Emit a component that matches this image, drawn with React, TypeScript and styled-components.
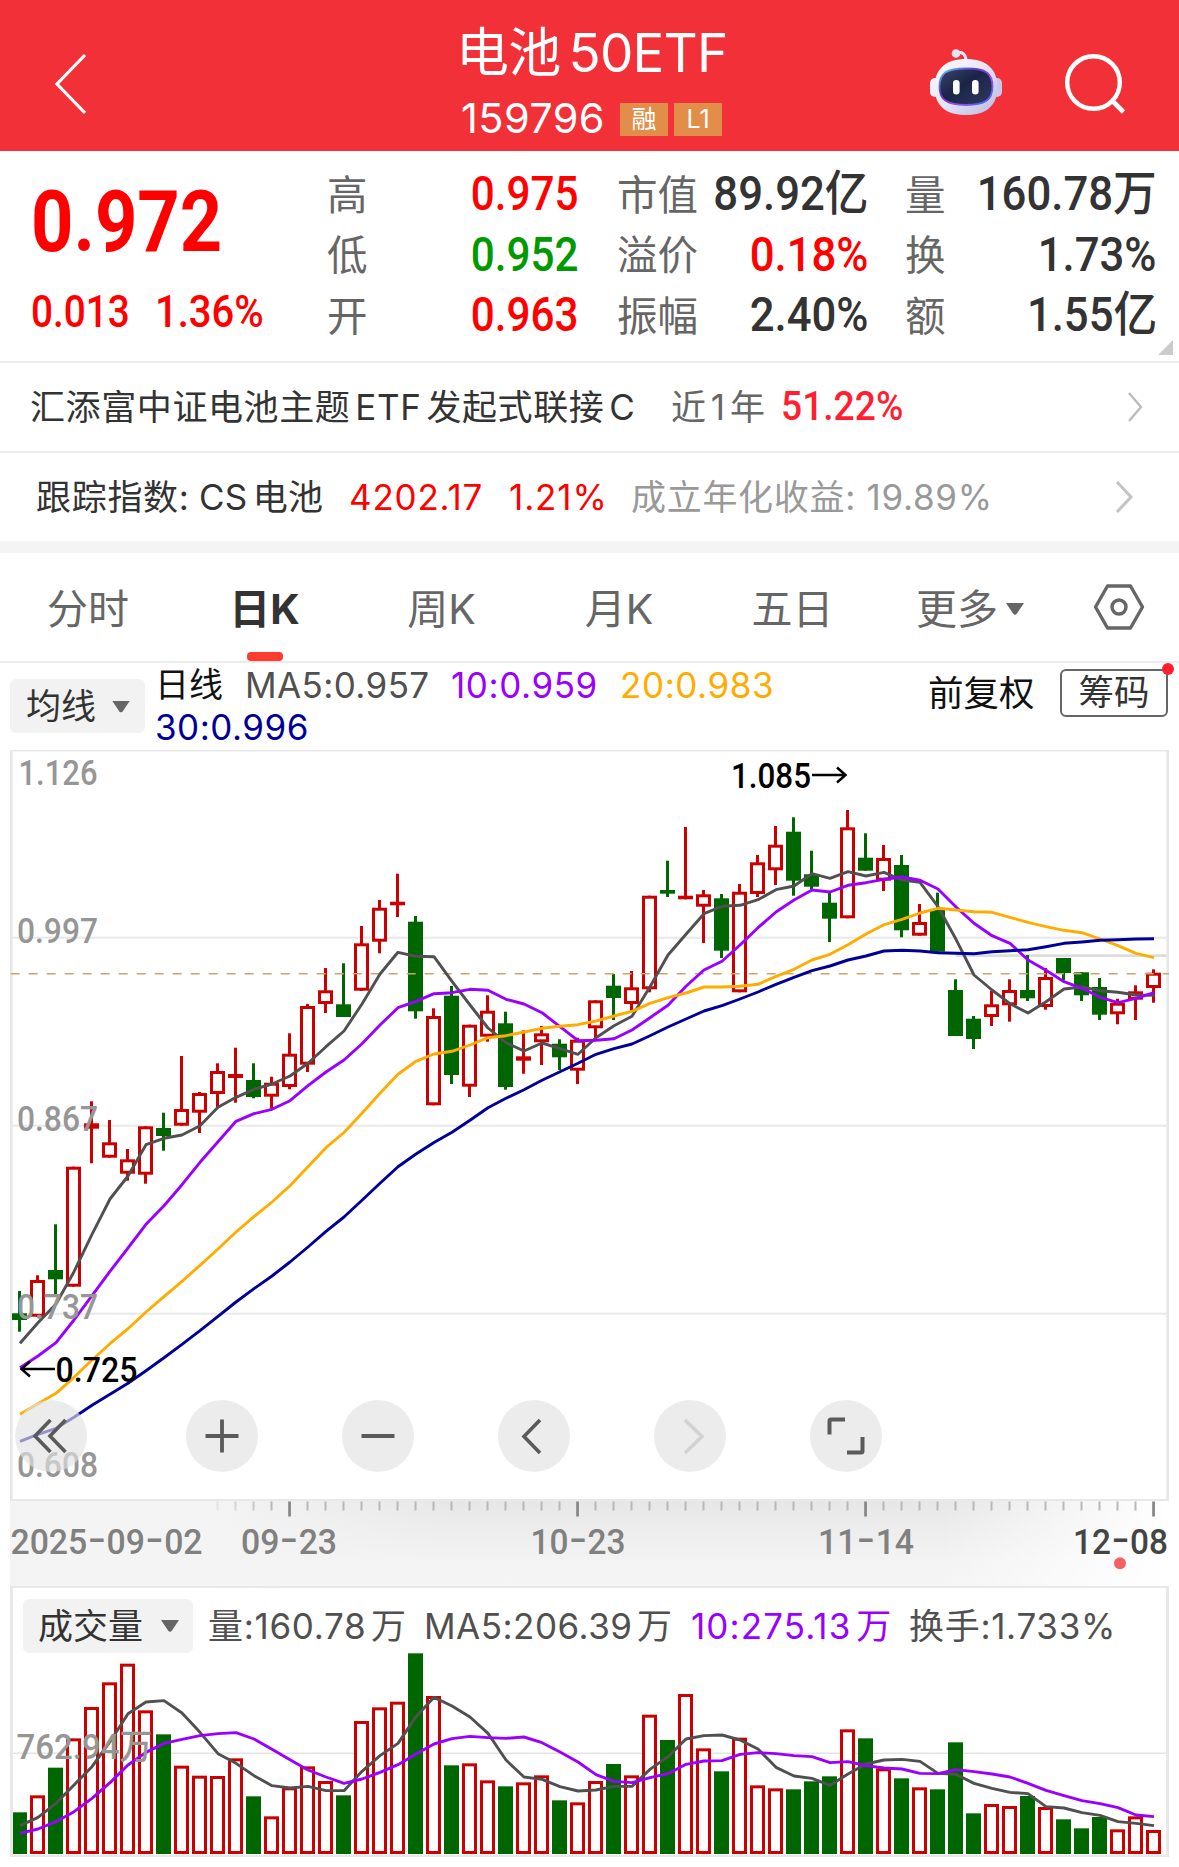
import React from "react";
import styled, { createGlobalStyle } from "styled-components";

const UI = '"Inter", "Noto Sans CJK SC", sans-serif';
const NUM = '"Roboto", "Noto Sans CJK SC", sans-serif';

const RED = "#ff0000";
const UP = "#cc0000";
const DOWN = "#006600";

/* ---------- data ---------- */

type Candle = [string, number, number, number, number];

// direction, high, body top, body bottom, low
const candles: Candle[] = [
  ["d", 1291, 1313.3, 1320, 1331.7],
  ["u", 1275.3, 1280, 1316.7, 1317],
  ["d", 1224.3, 1270, 1279.3, 1294],
  ["u", 1166.7, 1166.7, 1286.7, 1286.7],
  ["u", 1101.3, 1123.3, 1128.7, 1163.3],
  ["u", 1120, 1142.3, 1157.7, 1157.7],
  ["u", 1149, 1159.3, 1173.7, 1180.7],
  ["u", 1126.3, 1126.3, 1174.7, 1183.7],
  ["d", 1112.7, 1128, 1136, 1150.7],
  ["u", 1056, 1109, 1125.7, 1125.7],
  ["u", 1092, 1093, 1112.7, 1133],
  ["u", 1063.3, 1071, 1094, 1107.7],
  ["u", 1047.7, 1074, 1078, 1102.7],
  ["d", 1063.3, 1080, 1097, 1098.3],
  ["u", 1076.7, 1082.7, 1096.7, 1108.7],
  ["u", 1033.3, 1053.7, 1087, 1089.3],
  ["u", 1004, 1006, 1064.7, 1072],
  ["u", 968, 990.3, 1004, 1013],
  ["d", 963.3, 1004.3, 1017, 1017],
  ["u", 926, 943.3, 990.7, 991],
  ["u", 900, 907.7, 941.7, 953.3],
  ["u", 873.7, 901.7, 905.3, 917],
  ["d", 916, 921.7, 1011.3, 1018.7],
  ["u", 1008.3, 1016, 1105.3, 1105.3],
  ["d", 986, 995.7, 1075, 1084],
  ["u", 1024.7, 1024.7, 1086.7, 1097],
  ["u", 995.3, 1010.7, 1036.7, 1041.7],
  ["d", 1011.7, 1023.3, 1087, 1089.7],
  ["u", 1030.3, 1056.3, 1060.7, 1073.7],
  ["u", 1026, 1033.3, 1042.3, 1065],
  ["d", 1039.3, 1043.7, 1057.3, 1070],
  ["u", 1037.7, 1039.7, 1070.7, 1084],
  ["u", 1000.3, 1000.3, 1028.3, 1037.7],
  ["d", 974, 985.7, 998, 1020],
  ["u", 971, 987.3, 1004, 1010.7],
  ["u", 895.7, 895.7, 989.3, 992.3],
  ["d", 860.7, 890, 893.7, 897],
  ["u", 827, 895.7, 899.3, 899.3],
  ["u", 890, 894.3, 906.7, 943],
  ["d", 894, 898.3, 950.7, 958],
  ["u", 884, 891.7, 992.3, 992.3],
  ["u", 855, 862.3, 894, 897],
  ["u", 826, 844.7, 870.3, 885],
  ["d", 817.3, 831.7, 880.7, 895.7],
  ["d", 850.7, 874.3, 886.7, 889],
  ["d", 893, 902.7, 918.7, 942],
  ["u", 810, 827.3, 918.3, 918.3],
  ["d", 833.3, 857.7, 870.7, 870.7],
  ["u", 845, 858, 880.7, 891],
  ["d", 855, 865, 930.3, 937.3],
  ["u", 904, 922, 935.7, 935.7],
  ["d", 892.7, 910, 951.7, 951.7],
  ["d", 979.3, 990, 1036, 1036],
  ["d", 1016, 1018.7, 1039, 1049],
  ["u", 990.7, 1004.3, 1017, 1026],
  ["u", 979.3, 990, 1005.3, 1021.7],
  ["d", 955, 990, 998.3, 1001],
  ["u", 968, 977, 1007, 1009.7],
  ["d", 958, 958, 973, 980],
  ["d", 972.3, 972.3, 995.3, 1001],
  ["d", 978, 987, 1014.7, 1020],
  ["u", 998.7, 1002.7, 1014.3, 1024.3],
  ["u", 985.3, 991.3, 999.7, 1020],
  ["u", 969.3, 972.7, 988, 1002.7],
];

const ma5 = [
  1343.3, 1322.7, 1304, 1271.7, 1234.3, 1199, 1176, 1144.7, 1138.3, 1135, 1125.7, 1107.3, 1097.3, 1089.3, 1084, 1076,
  1063.3, 1046.7, 1031, 1004, 974, 952.3, 956.3, 956.7, 981.3, 1005, 1028, 1042.7, 1051, 1043, 1048.7, 1054.3,
  1037.7, 1025.7, 1016.3, 986.7, 955, 934.3, 913.7, 906.3, 905.3, 899.7, 889.7, 886, 873.7, 878.3, 871.7, 876,
  872.3, 880, 882.3, 906.7, 939.3, 975, 990, 1003.7, 1013, 1001.7, 989, 987, 990.7, 992.3, 995, 995.3,
];
const ma10 = [
  1367.7, 1356, 1342.7, 1320, 1295.7, 1271.3, 1248, 1224.3, 1205.7, 1184.7, 1162.3, 1141.7, 1121.3, 1113.7, 1109.3, 1100.7,
  1085.7, 1072, 1060, 1043.7, 1025, 1007.7, 1001.3, 993.7, 992.7, 989.3, 990.3, 999.3, 1004, 1012.7, 1026.7, 1040.7,
  1040.3, 1038.7, 1030, 1017.7, 1005.3, 986.3, 970, 961.3, 945, 927.7, 912, 900, 890, 892, 885.3, 882.7,
  879.3, 877, 880.3, 889, 907, 923.3, 935.7, 943.3, 960, 970.3, 981.7, 988.3, 997.3, 1002.7, 998.3, 992.7,
];
const ma20 = [
  1414.3, 1403.7, 1393.3, 1377.3, 1360, 1343.7, 1328.7, 1312, 1296.7, 1281.3, 1265.3, 1249, 1232, 1216.7, 1202, 1185.7,
  1166.7, 1147.7, 1132.5, 1113.3, 1093.3, 1074.3, 1061.3, 1054, 1051.3, 1045, 1037.7, 1035.7, 1032, 1028.3, 1026.3, 1024.7,
  1021, 1016, 1011.3, 1003.3, 997.7, 993, 987, 987, 986.3, 984.3, 976.3, 969.3, 960, 954.3, 944.7, 934,
  924.7, 919.3, 913, 908.3, 910, 911.7, 912.3, 917.3, 922.3, 926.7, 930.3, 932.7, 939, 945.7, 953.3, 957.7,
];
const ma30 = [
  1441.3, 1434.3, 1428.3, 1417.3, 1405.3, 1394.3, 1383.3, 1370.7, 1357.7, 1344.3, 1330.7, 1316.3, 1302, 1288.7, 1276, 1262,
  1247, 1231.3, 1217, 1200.3, 1183.3, 1166.7, 1154, 1142.5, 1132.3, 1120.3, 1107.7, 1098.3, 1089.7, 1080.3, 1071.7, 1063.3,
  1054.3, 1048.7, 1044, 1035.7, 1027, 1019, 1011, 1005.7, 999, 992, 984.3, 977.3, 970.7, 966, 960, 956,
  951, 950.3, 951, 952.7, 953.3, 953.7, 951.7, 950.7, 949.7, 946.7, 943.3, 942, 940.3, 939.7, 939, 938.7,
];

// all volume figures are in thirds of a pixel below the panel's origin
const volumes = [
  697, 646, 563, 475, 381, 307, 251, 391, 463, 557, 587, 588, 535, 649, 709, 622, 559, 603, 646, 423, 382, 365, 220, 348,
  556, 550, 601, 619, 607, 586, 661, 667, 603, 552, 586, 404, 480, 342, 505, 574, 473, 616, 625, 628, 604, 589, 448, 475,
  565, 595, 622, 628, 487, 700, 672, 678, 648, 681, 718, 745, 711, 748, 709, 750,
];
const volMa5 = [
  737, 712, 670, 615, 560, 485, 401, 366, 362, 399, 457, 521, 550, 587, 617, 624, 619, 632, 632, 574, 527, 490, 410, 352,
  378, 411, 460, 540, 591, 598, 620, 633, 630, 619, 619, 568, 530, 477, 467, 465, 480, 507, 562, 588, 595, 616, 582, 552,
  540, 538, 544, 580, 583, 610, 625, 637, 641, 680, 684, 698, 706, 725, 730, 737,
];
const volMa10 = [
  760, 747, 725, 695, 655, 608, 555, 517, 490, 478, 467, 461, 458, 477, 508, 539, 570, 591, 610, 597, 577, 554, 522, 492,
  476, 469, 473, 475, 471, 488, 516, 546, 584, 604, 608, 593, 581, 553, 543, 542, 523, 518, 521, 527, 530, 548, 545, 557,
  564, 567, 580, 581, 569, 575, 582, 591, 610, 631, 647, 662, 671, 683, 705, 710,
];

const cx = (i: number) => 19.5 + i * 18;
const volY = (v: number) => 1580 + v / 3;
const polyline = (ys: number[]) => ys.map((y, i) => `${cx(i) + 0.5},${y}`).join(" ");

/* ---------- styled parts ---------- */

const Global = createGlobalStyle`
  body { margin: 0; background: #fff; }
  * { box-sizing: border-box; }
`;

const Page = styled.main`
  width: 1179px;
  height: 1867px;
  overflow: hidden;
  display: flex;
  flex-direction: column;
  background: #fff;
  font-family: ${UI};
  color: #333;
  line-height: 1;
  white-space: nowrap;
`;

const Header = styled.header`
  height: 151px;
  flex: none;
  display: grid;
  grid-template-columns: 456px 344px 249px 130px;
  background: #f23037;
  color: #fff;
`;

const BackSlot = styled.div`
  padding: 52px 0 0 53px;
`;

const TitleBlock = styled.div`
  display: flex;
  flex-direction: column;
  padding-top: 23px;
`;

const Title = styled.h1`
  margin: 0;
  font-size: 53px;
  line-height: 60px;
  font-weight: 400;
  letter-spacing: -0.8px;
  word-spacing: -6px;
`;

const CodeRow = styled.div`
  display: flex;
  align-items: center;
  height: 34px;
  margin-top: 19px;
  padding-left: 4px;
  gap: 6px;
`;

const Code = styled.span`
  width: 154px;
  padding-left: 1px;
  font-size: 41.5px;
  letter-spacing: 0.4px;
`;

const Badge = styled.span`
  width: 48px;
  height: 33px;
  display: flex;
  align-items: center;
  justify-content: center;
  background: #e28d49;
  font-size: 25px;
`;

const RobotSlot = styled.div`
  padding: 48px 0 0 129px;
`;

const SearchSlot = styled.div`
  padding: 52px 0 0 14px;
`;

const Quote = styled.section`
  position: relative;
  height: 212px;
  flex: none;
  display: grid;
  grid-template-columns: 327px 251px 39px 250px 38px 252px;
  padding-top: 13px;
  border-bottom: 2px solid #ececec;
`;

const Latest = styled.div`
  display: flex;
  flex-direction: column;
  padding-left: 31px;
`;

const Condensed = styled.span<{ $size: number; $stretch: number; $color?: string; $right?: boolean; $weight?: number }>`
  display: inline-block;
  font-family: ${NUM};
  font-size: ${(p) => p.$size}px;
  font-weight: ${(p) => p.$weight ?? 500};
  color: ${(p) => p.$color ?? "#333"};
  transform: scaleX(${(p) => p.$stretch});
  transform-origin: ${(p) => (p.$right ? "right" : "left")} center;
`;

const BigPrice = styled.div`
  height: 115px;
  display: flex;
  align-items: center;
`;

const Change = styled.div`
  display: grid;
  grid-template-columns: 124px 1fr;
  height: 68px;
  align-items: center;
`;

const Stats = styled.div<{ $col: number }>`
  grid-column: ${(p) => p.$col};
  display: grid;
  grid-auto-rows: 60.5px;
`;

const Stat = styled.div`
  display: flex;
  align-items: center;
  justify-content: space-between;
`;

const StatLabel = styled.span`
  font-size: 40.5px;
  color: #666;
  padding-top: 3px;
`;

const Corner = styled.i`
  position: absolute;
  right: 6px;
  bottom: 6px;
  border-left: 15px solid transparent;
  border-bottom: 15px solid #ccc;
`;

const LinkRow = styled.section<{ $pad: number; $line?: boolean }>`
  height: ${(p) => (p.$line ? 90 : 88)}px;
  flex: none;
  display: flex;
  align-items: center;
  padding-left: ${(p) => p.$pad}px;
  border-bottom: ${(p) => (p.$line ? "2px solid #ececec" : "none")};
`;

const Run = styled.span<{ $w: number; $color?: string; $size?: number; $ls?: number; $ws?: number }>`
  width: ${(p) => p.$w}px;
  flex: none;
  font-size: ${(p) => p.$size ?? 35}px;
  letter-spacing: ${(p) => p.$ls ?? 0}px;
  word-spacing: ${(p) => p.$ws ?? 0}px;
  color: ${(p) => p.$color ?? "#333"};
`;

const Divider = styled.div`
  height: 12px;
  flex: none;
  background: #f4f4f4;
`;

const Tabs = styled.nav`
  height: 110px;
  flex: none;
  display: grid;
  grid-template-columns: 176px 177px 177px 178px 169px 177px 1fr;
  border-bottom: 2px solid #ececec;
`;

const Tab = styled.div<{ $active?: boolean; $shift?: number }>`
  display: flex;
  flex-direction: column;
  align-items: center;
  justify-content: space-between;
  padding-top: 35px;
  padding-left: ${(p) => p.$shift ?? 0}px;
  font-size: 41px;
  line-height: 42px;
  color: ${(p) => (p.$active ? "#333" : "#666")};
  font-weight: ${(p) => (p.$active ? 700 : 400)};

  &::after {
    content: "";
    width: 36px;
    height: 9px;
    border-radius: 4px;
    background: ${(p) => (p.$active ? "#ff3b30" : "transparent")};
  }
`;

const TabInner = styled.span`
  display: flex;
  align-items: center;
  gap: 8px;
`;

const Caret = styled.i<{ $c?: string }>`
  width: 18px;
  height: 12px;
  flex: none;
  background: ${(p) => p.$c ?? "#666"};
  clip-path: polygon(0 0, 100% 0, 60% 90%, 50% 100%, 40% 90%);
`;

const GearSlot = styled.div`
  padding: 30px 0 0 39px;
`;

const Legend = styled.section`
  height: 87px;
  flex: none;
  display: flex;
  padding-left: 10px;
`;

const Picker = styled.div<{ $w: number; $pad: number }>`
  width: ${(p) => p.$w}px;
  height: 54px;
  flex: none;
  display: flex;
  align-items: center;
  justify-content: space-between;
  padding: 1px ${(p) => p.$pad - 1}px 0 ${(p) => p.$pad}px;
  border-radius: 6px;
  background: #f2f2f2;
  font-size: 35px;
`;

const LegendPicker = styled.div`
  padding-top: 16px;
`;

const Averages = styled.div`
  width: 781px;
  padding: 1px 0 0 10px;
`;

const AverageLine = styled.div`
  display: flex;
  height: 42px;
  align-items: center;
`;

const Adjust = styled.div`
  width: 134px;
  padding: 13px 0 0 2px;
  font-size: 35.500px;
  color: #111;
`;

const Chips = styled.div`
  position: relative;
  width: 108px;
  height: 48px;
  margin-top: 6px;
  display: flex;
  align-items: center;
  justify-content: center;
  border: 2px solid #666;
  border-radius: 6px;
  font-size: 35.500px;

  &::after {
    content: "";
    position: absolute;
    top: -8px;
    right: -8px;
    width: 12px;
    height: 12px;
    border-radius: 50%;
    background: #ff1f30;
  }
`;

const ChartPanel = styled.section`
  position: relative;
  width: 1159px;
  height: 751px;
  flex: none;
  margin-left: 10px;
`;

const Drawing = styled.svg`
  display: block;
`;

const Controls = styled.div`
  position: absolute;
  left: 5px;
  top: 650px;
  display: flex;
  gap: 84px;
`;

const Round = styled.button<{ $wide?: boolean }>`
  width: 72px;
  height: 72px;
  margin-right: ${(p) => (p.$wide ? 15 : 0)}px;
  padding: 0;
  border: 0;
  border-radius: 50%;
  background: rgba(226, 226, 226, 0.65);
`;

const Axis = styled.section`
  width: 1159px;
  height: 85px;
  flex: none;
  margin-left: 10px;
`;

const VolumePanel = styled.section`
  width: 1159px;
  height: 271px;
  flex: none;
  margin-left: 10px;
  border: solid #e8e8e8;
  border-width: 2px 3px;
`;

const VolumeHeader = styled.div`
  display: flex;
  align-items: center;
  height: 65px;
  padding: 10px 0 0 10px;
`;

const VolumeRuns = styled.div`
  display: flex;
  padding: 2px 0 0 15px;
`;

/* ---------- icons ---------- */

const Stroke = ({ d, w, h, sw, color }: { d: string; w: number; h: number; sw: number; color: string }) => (
  <Drawing width={w} height={h} viewBox={`0 0 ${w} ${h}`} fill="none" stroke={color} strokeWidth={sw}>
    <path d={d} />
  </Drawing>
);

const Robot = () => (
  <Drawing width="74" height="70" viewBox="0 0 74 70">
    <defs>
      <linearGradient id="shell" x1="0" y1="0" x2="1" y2="1">
        <stop offset="0" stopColor="#ffffff" />
        <stop offset=".5" stopColor="#e6e3f6" />
        <stop offset="1" stopColor="#b9b6e0" />
      </linearGradient>
      <linearGradient id="rim" x1="0" y1="0" x2="1" y2="1">
        <stop offset="0" stopColor="#5fd6f5" />
        <stop offset=".35" stopColor="#5a35c8" />
        <stop offset=".6" stopColor="#a347ee" />
        <stop offset="1" stopColor="#3b6bf2" />
      </linearGradient>
      <linearGradient id="face" x1="0" y1="0" x2="1" y2="1">
        <stop offset="0" stopColor="#3b4669" />
        <stop offset=".45" stopColor="#1b2448" />
        <stop offset="1" stopColor="#2f3a63" />
      </linearGradient>
    </defs>
    <path d="M27 5.5C33 3 37 6 37 13" fill="none" stroke="#e9e6f8" strokeWidth="3" />
    <circle cx="27" cy="5.5" r="4.3" fill="#e4e2f5" />
    <rect x="1" y="30" width="12" height="19" rx="5" fill="#f0effa" />
    <rect x="61" y="30" width="12" height="19" rx="5" fill="#c9c7ea" />
    <path d="M37 11C57 11 68.500 21 68.500 39C68.500 57 58 67 37 67C16 67 5.500 57 5.500 39C5.500 21 17 11 37 11Z" fill="url(#shell)" />
    <path
      d="M37 20.500C57 20.500 63.500 25 63.500 38.500C63.500 52 56 57 37 57C18 57 10.500 52 10.500 38.500C10.500 25 17 20.500 37 20.500Z"
      fill="url(#face)"
      stroke="url(#rim)"
      strokeWidth="1.8"
    />
    <rect x="24" y="32" width="6.600" height="14.600" rx="3.300" fill="#fff" />
    <rect x="43" y="32" width="6.600" height="14.600" rx="3.300" fill="#fff" />
  </Drawing>
);

/* ---------- chart pieces ---------- */

interface LabelProps {
  x: number;
  y: number;
  w: number;
  children: React.ReactNode;
  fill?: string;
  weight?: number;
}

const ChartLabel = ({ x, y, w, children, fill = "#969696", weight = 500 }: LabelProps) => (
  <text x={x} y={y} textLength={w} lengthAdjust="spacingAndGlyphs" fill={fill} fontFamily={NUM} fontSize={35.5} fontWeight={weight}>
    {children}
  </text>
);

const DateLabel = ({ x, w, parts, fill = "#808080" }: { x: number; w: number; parts: string[]; fill?: string }) => (
  <ChartLabel x={x} y={1554} w={w} fill={fill}>
    {parts.map((p, i) => (
      <React.Fragment key={i}>
        {i > 0 && <tspan fontFamily="Inter" fontSize={44} fontWeight={400}>-</tspan>}
        {p}
      </React.Fragment>
    ))}
  </ChartLabel>
);

const Box = ({ i, top, bottom, up }: { i: number; top: number; bottom: number; up: boolean }) =>
  up && bottom - top > 6 ? (
    <rect x={cx(i) - 6} y={top + 1.5} width={12} height={bottom - top - 3} fill="#fff" stroke={UP} strokeWidth={3} />
  ) : (
    <rect x={cx(i) - 7.5} y={top} width={15} height={bottom - top} fill={up ? UP : DOWN} />
  );

const Line = ({ ys, color }: { ys: number[]; color: string }) => (
  <polyline points={polyline(ys)} fill="none" stroke={color} strokeWidth={2.9} strokeLinejoin="round" />
);

const PriceChart = () => (
  <Drawing width="1159" height="751" viewBox="10 750 1159 751">
    <g fill="#e8e8e8">
      <rect x="10" y="749.500" width="1159" height="2" />
      <rect x="10" y="1499" width="1159" height="2" />
      <rect x="10" y="750" width="2.700" height="751" />
      <rect x="1166.300" y="750" width="2.700" height="751" />
      <rect x="12" y="936.700" width="1155" height="2" />
      <rect x="12" y="1124.700" width="1155" height="2" />
      <rect x="12" y="1312.700" width="1155" height="2" />
    </g>
    <rect x="955.700" y="954.300" width="211" height="2.700" fill="#dcdcdc" />
    {candles.map(([dir, high, top, bottom, low], i) => (
      <g key={i}>
        <rect x={cx(i) - 1.5} y={high} width={3} height={low - high} fill={dir === "u" ? UP : DOWN} />
        <Box i={i} top={top} bottom={bottom} up={dir === "u"} />
      </g>
    ))}
    <line x1="10.700" x2="1169" y1="973.700" y2="973.700" stroke="#cfa46b" strokeWidth="1.400" strokeDasharray="9 9" />
    <Line ys={ma5} color="#505050" />
    <Line ys={ma10} color="#9900ff" />
    <Line ys={ma20} color="#ffac00" />
    <Line ys={ma30} color="#000099" />
    <ChartLabel x={18.5} y={785} w={79}>1.126</ChartLabel>
    <ChartLabel x={17} y={942.7} w={81}>0.997</ChartLabel>
    <ChartLabel x={17} y={1130.7} w={81}>0.867</ChartLabel>
    <ChartLabel x={17} y={1318.7} w={81}>0.737</ChartLabel>
    <ChartLabel x={17} y={1476.7} w={81}>0.608</ChartLabel>
    <ChartLabel x={55.5} y={1381.7} w={82} fill="#000">0.725</ChartLabel>
    <ChartLabel x={731} y={788} w={80} fill="#000">1.085</ChartLabel>
    <g fill="none" stroke="#000" strokeWidth="2.500">
      <path d="M55 1369H21M30 1361.500L21.500 1369L30 1376.500" />
      <path d="M812 775H846M837 767.500L845.500 775L837 782.500" />
    </g>
  </Drawing>
);

const TimeAxis = () => (
  <Drawing width="1159" height="85" viewBox="10 1501 1159 85">
    <defs>
      <linearGradient id="shade" x1="0" y1="0" x2="0" y2="1">
        <stop offset="0" stopColor="#e7e7e7" />
        <stop offset=".7" stopColor="#f3f3f3" />
        <stop offset="1" stopColor="#f5f5f5" />
      </linearGradient>
      <linearGradient id="veilLeft">
        <stop offset="0" stopColor="#f4f4f4" />
        <stop offset="1" stopColor="#f4f4f4" stopOpacity="0" />
      </linearGradient>
      <linearGradient id="veilRight">
        <stop offset="0" stopColor="#fff" stopOpacity="0" />
        <stop offset="1" stopColor="#fff" />
      </linearGradient>
    </defs>
    <rect x="10" y="1501" width="1159" height="85" fill="url(#shade)" />
    <rect x="10" y="1501" width="200" height="85" fill="#f4f4f4" />
    <rect x="209" y="1501" width="240" height="85" fill="url(#veilLeft)" />
    <rect x="940" y="1501" width="229" height="85" fill="url(#veilRight)" />
    {candles.map((_, i) => {
      const major = i % 16 === 15;
      return i < 11 ? null : (
        <rect
          key={i}
          x={cx(i) - (major ? 1.3 : 1)}
          y={1501.5}
          width={major ? 2.7 : 2}
          height={major ? 15 : 9}
          fill={major ? "#858585" : "#b8b8b8"}
          opacity={i < 14 ? (i - 10) / 4 : 1}
        />
      );
    })}
    <DateLabel x={10.5} w={192} parts={["2025", "09", "02"]} />
    <DateLabel x={241} w={96} parts={["09", "23"]} />
    <DateLabel x={530.5} w={95} parts={["10", "23"]} />
    <DateLabel x={818} w={96} parts={["11", "14"]} />
    <DateLabel x={1073} w={95} parts={["12", "08"]} fill="#444" />
    <circle cx="1120" cy="1563.300" r="6" fill="#f66060" />
  </Drawing>
);

const VolumeChart = () => (
  <Drawing width="1153" height="202" viewBox="13 1653 1153 202">
    <rect x="13" y="1752.500" width="1153" height="1.500" fill="#e4e4e4" />
    {volumes.map((v, i) => (
      <Box key={i} i={i} top={volY(v)} bottom={1854} up={candles[i][0] === "u"} />
    ))}
    <Line ys={volMa5.map(volY)} color="#505050" />
    <Line ys={volMa10.map(volY)} color="#9900ff" />
    <ChartLabel x={16.5} y={1758.7} w={136}>762.94万</ChartLabel>
  </Drawing>
);

/* ---------- page ---------- */

const statColumns = [
  { col: 2, stretch: 0.88, rows: [["高", "0.975", RED], ["低", "0.952", "#009900"], ["开", "0.963", RED]] },
  { col: 4, stretch: 0.91, rows: [["市值", "89.92亿", "#333"], ["溢价", "0.18%", RED], ["振幅", "2.40%", "#333"]] },
  { col: 6, stretch: 0.91, rows: [["量", "160.78万", "#333"], ["换", "1.73%", "#333"], ["额", "1.55亿", "#333"]] },
];

export default function App() {
  return (
    <Page>
      <Global />
      <Header>
        <BackSlot>
          <Stroke w={36} h={64} sw={3.2} color="#fff" d="M32 3L4 32L32 61" />
        </BackSlot>
        <TitleBlock>
          <Title>电池 50ETF</Title>
          <CodeRow>
            <Code>159796</Code>
            <Badge>融</Badge>
            <Badge>L1</Badge>
          </CodeRow>
        </TitleBlock>
        <RobotSlot>
          <Robot />
        </RobotSlot>
        <SearchSlot>
          <Drawing width="64" height="64" viewBox="1063 52 64 64" fill="none" stroke="#fff">
            <circle cx="1093.500" cy="82.500" r="26.300" strokeWidth="4.400" />
            <path d="M1112.500 101L1123.500 112" strokeWidth="4.600" />
          </Drawing>
        </SearchSlot>
      </Header>

      <Quote>
        <Latest>
          <BigPrice>
            <Condensed $size={86} $stretch={0.86} $color={RED} $weight={700}>0.972</Condensed>
          </BigPrice>
          <Change>
            <Condensed $size={43.5} $stretch={0.89} $color={RED}>0.013</Condensed>
            <Condensed $size={43.5} $stretch={0.92} $color={RED}>1.36%</Condensed>
          </Change>
        </Latest>
        {statColumns.map(({ col, stretch, rows }) => (
          <Stats key={col} $col={col}>
            {rows.map(([label, value, color]) => (
              <Stat key={label}>
                <StatLabel>{label}</StatLabel>
                <Condensed $size={48} $stretch={stretch} $color={color} $right>{value}</Condensed>
              </Stat>
            ))}
          </Stats>
        ))}
        <Corner />
      </Quote>

      <LinkRow $pad={30} $line>
        <Run $w={641} $ls={0.6} $ws={-5.5}>汇添富中证电池主题 ETF 发起式联接 C</Run>
        <Run $w={110} $color="#666" $ws={-5}>近 1 年</Run>
        <Run $w={346}>
          <Condensed $size={40} $stretch={0.93} $color="#ff1f30">51.22%</Condensed>
        </Run>
        <Stroke w={18} h={34} sw={2.4} color="#bbb" d="M2 3L14 17L2 31" />
      </LinkRow>
      <LinkRow $pad={36}>
        <Run $w={163} $ls={0.7}>跟踪指数:</Run>
        <Run $w={150} $ls={0.3} $ws={-5}>CS 电池</Run>
        <Run $w={160} $color={RED} $ls={0.8}>4202.17</Run>
        <Run $w={122} $color={RED} $ls={0.9}>1.21%</Run>
        <Run $w={483} $color="#999" $ls={0.7}>成立年化收益: 19.89%</Run>
        <Stroke w={22} h={34} sw={3} color="#c4c4c4" d="M3 2L17 17L3 32" />
      </LinkRow>
      <Divider />

      <Tabs>
        <Tab>分时</Tab>
        <Tab $active>日K</Tab>
        <Tab>周K</Tab>
        <Tab>月K</Tab>
        <Tab>五日</Tab>
        <Tab $shift={9}>
          <TabInner>更多<Caret /></TabInner>
        </Tab>
        <GearSlot>
          <Drawing width="52" height="48" viewBox="0 0 52 48" fill="none" stroke="#666" strokeWidth="3.400" strokeLinejoin="round">
            <path d="M14.500 3H37.500L49.500 24L37.500 45H14.500L2.500 24Z" />
            <circle cx="26" cy="24" r="7" />
          </Drawing>
        </GearSlot>
      </Tabs>

      <Legend>
        <LegendPicker>
          <Picker $w={135} $pad={16}>均线<Caret /></Picker>
        </LegendPicker>
        <Averages>
          <AverageLine>
            <Run $w={90} $size={34} $color="#111">日线</Run>
            <Run $w={206} $color="#505050" $ls={0.4}>MA5:0.957</Run>
            <Run $w={169} $color="#9900ff" $ls={0.6}>10:0.959</Run>
            <Run $w={160} $color="#ffac00" $ls={0.6}>20:0.983</Run>
          </AverageLine>
          <AverageLine>
            <Run $w={160} $color="#000099" $ls={0.5}>30:0.996</Run>
          </AverageLine>
        </Averages>
        <Adjust>前复权</Adjust>
        <Chips>筹码</Chips>
      </Legend>

      <ChartPanel>
        <PriceChart />
        <Controls>
          <Round $wide>
            <Stroke w={72} h={72} sw={3.6} color="#5a5a5a" d="M35.500 20L20 36L35.500 52M50.500 20L35 36L50.500 52" />
          </Round>
          <Round>
            <Stroke w={72} h={72} sw={3.8} color="#5a5a5a" d="M19.500 36H52.500M36 19.500V52.500" />
          </Round>
          <Round>
            <Stroke w={72} h={72} sw={3.8} color="#5a5a5a" d="M19.500 36H52.500" />
          </Round>
          <Round>
            <Stroke w={72} h={72} sw={3.6} color="#5a5a5a" d="M42 20L26 36.500L42 53" />
          </Round>
          <Round>
            <Stroke w={72} h={72} sw={3.6} color="#d2d2d2" d="M31 20L48 36.500L31 53" />
          </Round>
          <Round>
            <Stroke w={72} h={72} sw={4} color="#5a5a5a" d="M19.500 34.500V21Q19.500 19.500 21 19.500H35M37 52.500H51Q52.500 52.500 52.500 51V37" />
          </Round>
        </Controls>
      </ChartPanel>

      <Axis>
        <TimeAxis />
      </Axis>

      <VolumePanel>
        <VolumeHeader>
          <Picker $w={170} $pad={15}>成交量<Caret /></Picker>
          <VolumeRuns>
            <Run $w={216} $color="#505050" $ls={0.7} $ws={-6}>量:160.78 万</Run>
            <Run $w={267} $color="#505050" $ls={0.5} $ws={-6}>MA5:206.39 万</Run>
            <Run $w={218} $color="#9900ff" $ls={1.1} $ws={-6}>10:275.13 万</Run>
            <Run $w={220} $color="#505050" $ls={0.7}>换手:1.733%</Run>
          </VolumeRuns>
        </VolumeHeader>
        <VolumeChart />
      </VolumePanel>
    </Page>
  );
}
